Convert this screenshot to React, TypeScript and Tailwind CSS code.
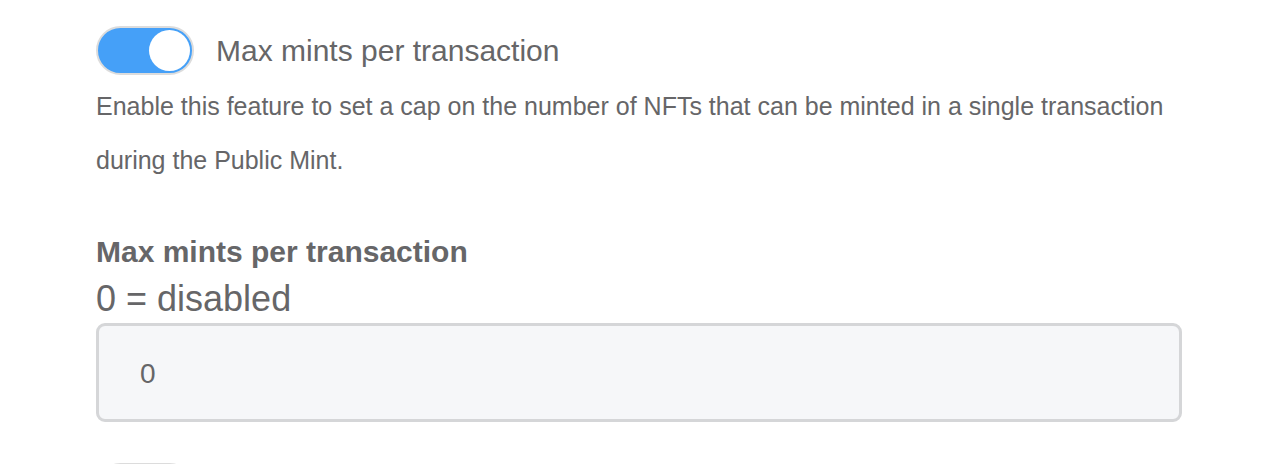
import React, { useState } from "react";

const Toggle: React.FC<{ on: boolean; onChange: () => void }> = ({ on, onChange }) => {
  return (
    <button
      onClick={onChange}
      className={`flex items-center w-[98px] h-[49px] rounded-full border-2 border-[#dcdcdc] px-[2px] ${
        on ? "bg-[#45a0f8] justify-end" : "bg-[#e9e9ea] justify-start"
      }`}
    >
      <span className="block w-[41px] h-[41px] rounded-full bg-white" />
    </button>
  );
};

const App: React.FC = () => {
  const [maxOn, setMaxOn] = useState(true);
  const [other, setOther] = useState(false);

  return (
    <main className="bg-white min-h-screen px-[96px] pt-[26px] font-['Liberation_Sans',Arial,sans-serif] text-[#666668] overflow-hidden">
      <div className="flex items-center gap-[22px]">
        <Toggle on={maxOn} onChange={() => setMaxOn(!maxOn)} />
        <span className="text-[30px] leading-none">Max mints per transaction</span>
      </div>
      <p className="mt-[4px] text-[25px] leading-[54px]">
        Enable this feature to set a cap on the number of NFTs that can be minted in a single transaction
        <br />
        during the Public Mint.
      </p>

      <div className="mt-[45px]">
        <h3 className="text-[30px] font-bold leading-[40px]">Max mints per transaction</h3>
        <div className="mt-[5px] text-[36px] leading-[44px]">0 = disabled</div>
        <input
          defaultValue="0"
          className="mt-[2px] block w-full h-[99px] rounded-[9px] border-[3px] border-[#d5d6d8] bg-[#f6f7f9] px-[41px] pt-[3px] text-[28px] text-[#666668] outline-none"
        />
      </div>

      <div className="mt-[41px]">
        <Toggle on={other} onChange={() => setOther(!other)} />
      </div>
    </main>
  );
};

export default App;
